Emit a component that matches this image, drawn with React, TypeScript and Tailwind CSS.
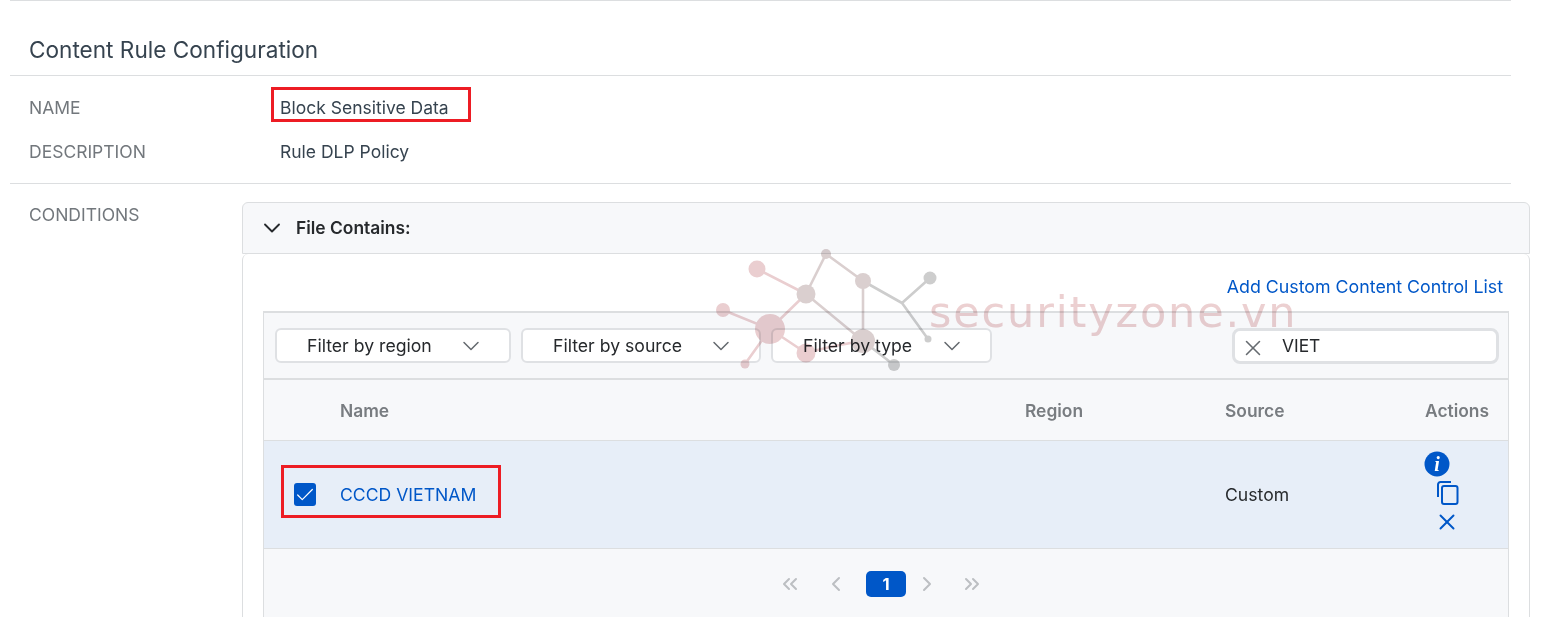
import React from "react";
import { ChevronDown, X, Check, ChevronLeft, ChevronRight, ChevronsLeft, ChevronsRight } from "lucide-react";

const FONT = "font-['Inter',sans-serif]";

function FilterButton({ label, width, gap }: { label: string; width: string; gap: string }) {
  return (
    <div className={`flex h-[35px] items-center rounded-[6px] border-2 border-[#dfe1e4] bg-white pl-[30px] ${width}`}>
      <span className="text-[17.65px] leading-none text-[#26292c]">{label}</span>
      <ChevronDown className={`mt-[1px] h-[28px] w-[28px] text-[#666b70] ${gap}`} strokeWidth={1.3} />
    </div>
  );
}

function Watermark() {
  const pink = "#eaced0";
  const gray = "#cdcdcd";
  const mix = "#dacfcf";
  return (
    <div className="pointer-events-none absolute left-[700px] top-[240px] h-[140px] w-[610px] mix-blend-multiply">
      <svg width="240" height="140" viewBox="700 240 240 140" className="absolute left-0 top-0">
        <g strokeWidth="2.6" fill="none">
          <path d="M757 269L806 294M806 294L770 329M723 310L770 329M770 329L806 353M770 329L745 364" stroke={pink} />
          <path d="M806 294L826 254M806 294L863 341M826 254L863 281M863 281L863 341" stroke={mix} />
          <path d="M863 281L902 303M902 303L930 278M902 303L928 339M863 341L894 365" stroke={gray} />
          <path d="M806 353Q835 345 863 341" stroke={pink} />
        </g>
        <circle cx="757" cy="269" r="8.5" fill={pink} />
        <circle cx="826" cy="254" r="5" fill={mix} />
        <circle cx="806" cy="294" r="9.5" fill={mix} />
        <circle cx="863" cy="281" r="8" fill={mix} />
        <circle cx="930" cy="278" r="6.5" fill={gray} />
        <circle cx="723" cy="310" r="7" fill={pink} />
        <circle cx="770" cy="329" r="15" fill={pink} />
        <circle cx="863" cy="341" r="12" fill={mix} />
        <circle cx="806" cy="353" r="9.5" fill={pink} />
        <circle cx="745" cy="364" r="4.5" fill={pink} />
        <circle cx="928" cy="339" r="3.5" fill={gray} />
        <circle cx="894" cy="365" r="6" fill={gray} />
      </svg>
      <span className="absolute left-[229px] top-[58px] font-['DejaVu_Sans',sans-serif] text-[43px] leading-[28px] tracking-[1.85px] text-[#ecd0d1]">
        securityzone.vn
      </span>
    </div>
  );
}

export default function App() {
  return (
    <div className={`relative h-[617px] w-[1553px] overflow-hidden bg-white ${FONT}`}>
      <div className="ml-[10px] w-[1501px] border-t border-[#dcdee0]">
        <div className="flex h-[75px] items-center border-b border-[#dcdee0] pl-[19px] pt-[25px]">
          <h1 className="text-[22.6px] font-normal leading-none text-[#36434f]">Content Rule Configuration</h1>
        </div>
        <div className="h-[108px] border-b border-[#dcdee0] pl-[19px] text-[17.5px] leading-[20px]">
          <div className="flex pt-[22px]">
            <span className="w-[251px] text-[#72777c]">NAME</span>
            <span className="relative text-[#36434f]">
              Block Sensitive Data
              <span className="absolute -left-[9px] -top-[11px] h-[35px] w-[200px] border-[3px] border-[#ed1c24]" />
            </span>
          </div>
          <div className="flex pt-[24px]">
            <span className="w-[251px] text-[#72777c]">DESCRIPTION</span>
            <span className="text-[#36434f]">Rule DLP Policy</span>
          </div>
        </div>
      </div>

      <div className="flex pl-[29px] pt-[18px]">
        <span className="w-[213px] pt-[3px] text-[17.5px] leading-[20px] text-[#72777c]">CONDITIONS</span>
        <div className="w-[1288px]">
          <div className="flex h-[52px] items-center gap-[10px] rounded-t-[6px] border border-[#dcdee0] bg-[#f7f8fa] pl-[15px]">
            <ChevronDown className="h-[28px] w-[28px] text-[#26292c]" strokeWidth={1.6} />
            <span className="text-[17.4px] font-semibold leading-none text-[#26292c]">File Contains:</span>
          </div>
          <div className="h-[400px] rounded-t-[6px] border-x border-[#dcdee0] bg-white pl-[20px] pr-[20px]">
            <div className="flex h-[57px] items-start justify-end pr-[6px] pt-[23px]">
              <a className="text-[17.8px] leading-[20px] text-[#0057c8]">Add Custom Content Control List</a>
            </div>
            <div className="w-[1246px] border-x border-t-2 border-[#dcdee0] bg-[#f7f8fa]">
              <div className="flex h-[67px] items-start border-b-2 border-[#dcdee0] pl-[11px] pt-[15px]">
                <FilterButton label="Filter by region" width="w-[236px]" gap="ml-[25px]" />
                <div className="ml-[10px]">
                  <FilterButton label="Filter by source" width="w-[240px]" gap="ml-[25px]" />
                </div>
                <div className="ml-[10px]">
                  <FilterButton label="Filter by type" width="w-[221px]" gap="ml-[26px]" />
                </div>
                <div className="ml-[240px] flex h-[36px] w-[267px] items-center rounded-[8px] border-[3px] border-[#dfe1e4] bg-white pl-[5px]">
                  <X className="mt-[3px] h-[26px] w-[26px] text-[#666b70]" strokeWidth={1.4} />
                  <span className="-mt-[1px] ml-[16px] text-[17.4px] leading-none text-[#26292c]">VIET</span>
                </div>
              </div>
              <div className="flex h-[61px] items-center border-b border-[#dcdee0] pt-[2px] text-[17.4px] font-semibold text-[#787c80]">
                <span className="ml-[76px] w-[685px]">Name</span>
                <span className="w-[200px]">Region</span>
                <span className="w-[200px]">Source</span>
                <span>Actions</span>
              </div>
              <div className="flex h-[108px] items-center border-b border-[#dcdee0] bg-[#e7eef8] text-[17.6px]">
                <div className="relative ml-[30px] flex h-[23px] w-[22px] items-center justify-center rounded-[3px] bg-[#0057c8]">
                  <Check className="h-[22px] w-[22px] text-white" strokeWidth={1.3} />
                  <span className="absolute -left-[13px] -top-[18px] h-[53px] w-[220px] border-[3px] border-[#ed1c24]" />
                </div>
                <a className="ml-[24px] w-[685px] pt-[2px] text-[#0057c8]">CCCD VIETNAM</a>
                <span className="w-[200px]" />
                <span className="w-[200px] pt-[2px] text-[#26292c]">Custom</span>
                <div className="-mt-[4px] flex w-[46px] flex-col items-start">
                  <svg width="26" height="26" viewBox="0 0 26 26" className="-ml-[1px]">
                    <circle cx="13" cy="13" r="12.5" fill="#0057c8" />
                    <text x="13" y="19.5" textAnchor="middle" fill="#fff" fontSize="20" fontWeight="700" fontStyle="italic" fontFamily="Liberation Serif, serif">i</text>
                  </svg>
                  <svg width="24" height="24" viewBox="0 0 24 24" fill="none" stroke="#0057c8" strokeWidth="2" className="ml-[11px] mt-[4px]">
                    <path d="M2 16V3.5A2.5 2.5 0 0 1 4.5 1H15" />
                    <rect x="6" y="5" width="15.5" height="18" rx="2" />
                  </svg>
                  <X className="ml-[9px] mt-[4px] h-[26px] w-[26px] text-[#0057c8]" strokeWidth={1.8} />
                </div>
              </div>
              <div className="flex h-[70px] items-start pt-[22px] text-[#bcbfc2]">
                <ChevronsLeft className="ml-[514px] mt-[1px] h-[24px] w-[24px]" strokeWidth={2} />
                <ChevronLeft className="ml-[22px] mt-[1px] h-[24px] w-[24px]" strokeWidth={2} />
                <div className="ml-[18px] flex h-[26px] w-[40px] items-center justify-center rounded-[5px] bg-[#0057c8] text-[16.5px] font-bold text-white">1</div>
                <ChevronRight className="ml-[9px] mt-[1px] h-[24px] w-[24px]" strokeWidth={2} />
                <ChevronsRight className="ml-[21px] mt-[1px] h-[24px] w-[24px]" strokeWidth={2} />
              </div>
            </div>
          </div>
        </div>
      </div>
      <Watermark />
    </div>
  );
}
